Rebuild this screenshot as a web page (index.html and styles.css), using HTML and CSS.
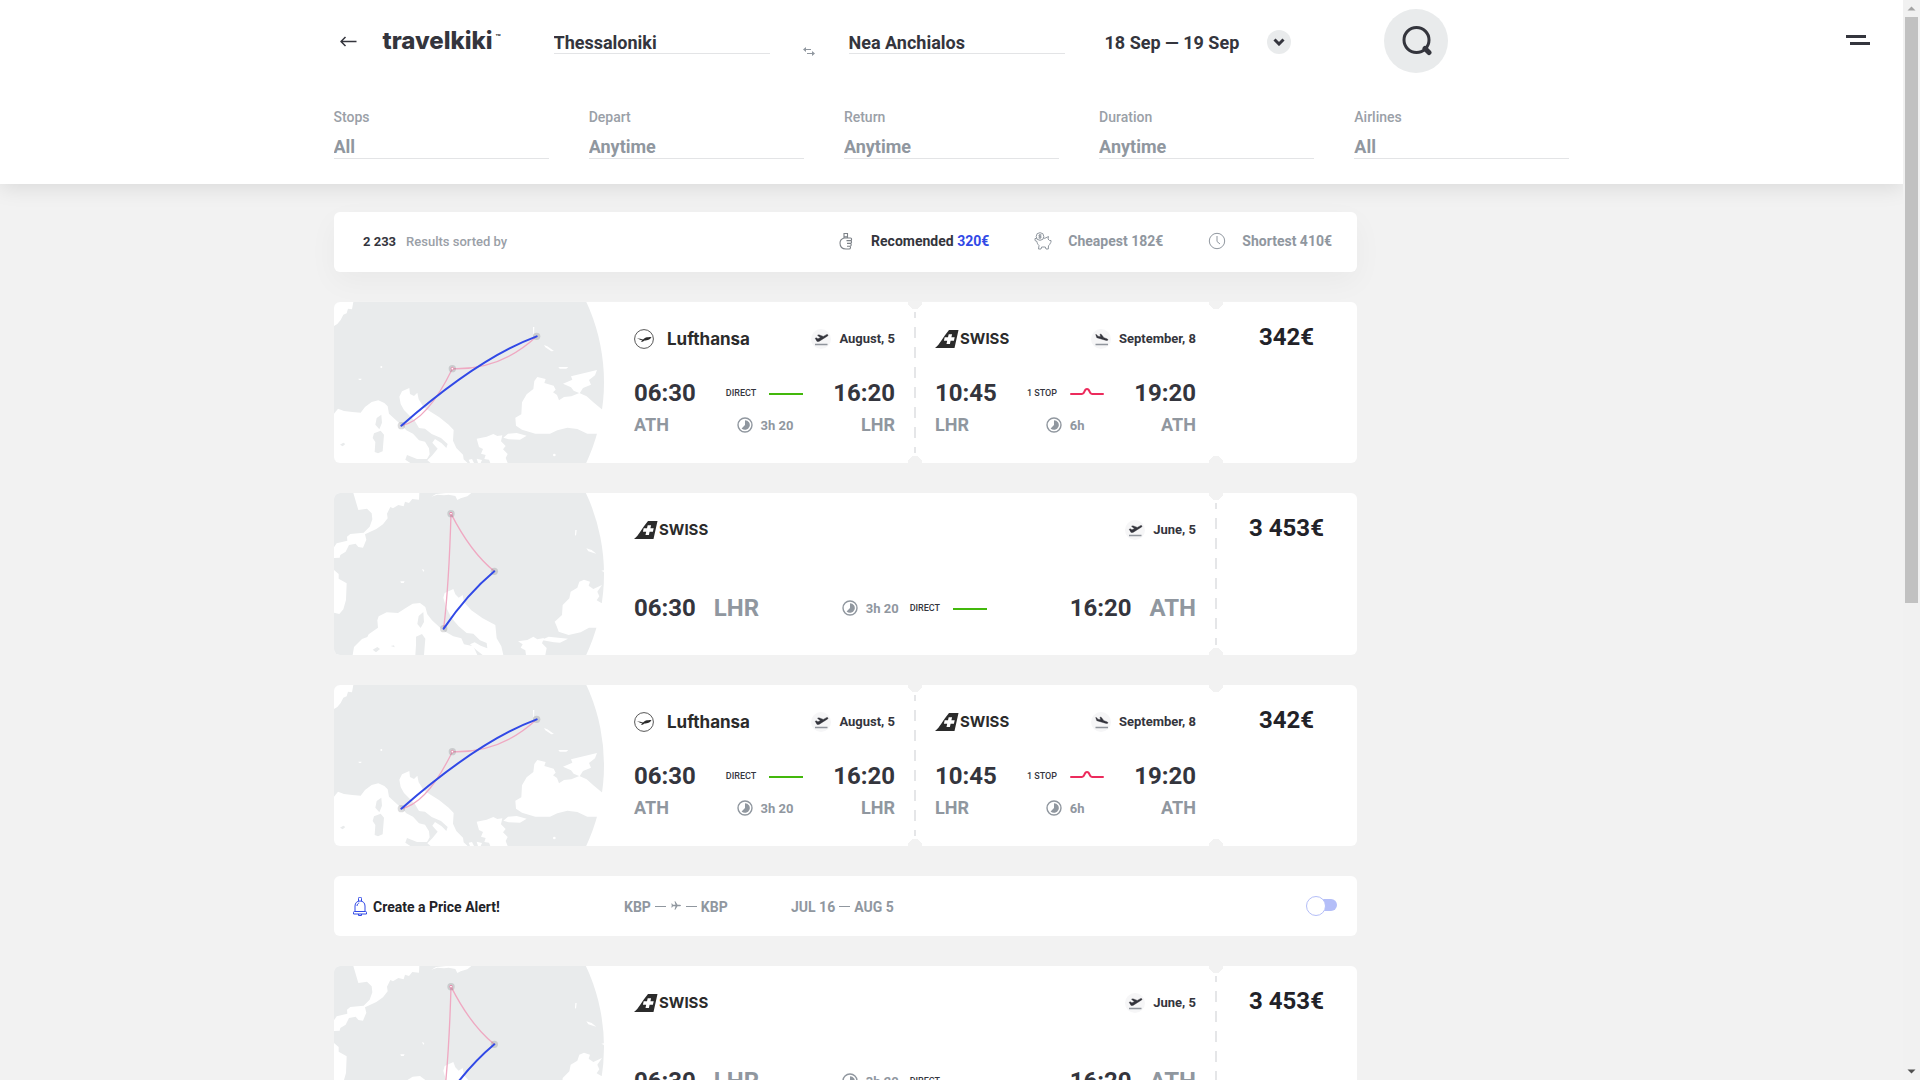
FILE: index.html
```html
<!DOCTYPE html>
<html lang="en">
<head>
<meta charset="utf-8">
<title>travelkiki – Flights</title>
<meta name="viewport" content="width=device-width, initial-scale=1">
<link rel="stylesheet" href="styles.css">
</head>
<body>
<svg class="sprite" aria-hidden="true">
  <symbol id="takeoff" viewBox="0 0 20 20">
    <path d="M4.2 9.2l1-.4 1.700 1 2.500-1-2.900-2.500 1.400-.5 4.400 1.600 2.700-1.500c.8-.4 1.700-.4 1.900 0 .2.5-.2 1.100-1 1.500L8 12.400H6z" fill="#34353d" stroke="#34353d" stroke-width=".4"/>
    <path d="M4 15.500h12.500" stroke="#90959c" stroke-width="1.300"/>
  </symbol>
  <symbol id="landing" viewBox="0 0 20 20">
    <path d="M4.700 5.500l1 .2 1.200 1.500 2.600.5-.5-2.700 1.400.4 2.500 3.300 2.900 1c.8.3 1.300.9 1.100 1.400-.1.500-.9.600-1.700.3L5.800 8.700z" fill="#34353d" stroke="#34353d" stroke-width=".4"/>
    <path d="M4.500 15.500H17" stroke="#90959c" stroke-width="1.300"/>
  </symbol>
  <symbol id="duration" viewBox="0 0 16 16">
    <circle cx="8" cy="8" r="7" fill="none" stroke="#90979f" stroke-width="1.400"/>
    <path d="M8 3.200a4.800 4.800 0 1 1-3.400 8.200L8 8z" fill="#90979f"/>
  </symbol>
  <symbol id="crane" viewBox="0 0 20 20">
    <circle cx="10" cy="10" r="9.400" fill="#fff" stroke="#2b2b2b" stroke-width=".8"/>
    <path d="M2.500 9.300c3 .2 5 1 6.600 1.300C10.300 8.800 12.500 8 17.600 8l-1 .8h.8l-1.300.8h.6l-1.600.8c-1.700 1-3.300.7-4.600 1.200-1 1-2 1.500-3.600 1.400l1.400-1.500C6.500 11.200 4.900 10 2.500 9.300z" fill="#2b2b2b"/>
  </symbol>
  <symbol id="tail" viewBox="0 0 24 18">
    <path d="M14 0h9.500L19.500 18H0C5 14.500 8 7 14 0z" fill="#2b2b2b"/>
    <path d="M13.700 4.200h3.400l-.7 3.100h3.300l-.8 3.400h-3.300l-.7 3.200h-3.400l.7-3.200H8.900l.8-3.400H13z" fill="#fff"/>
  </symbol>
  <symbol id="line-direct" viewBox="0 0 34 10">
    <path d="M0 6h34" stroke="#43b80c" stroke-width="2"/>
  </symbol>
  <symbol id="line-stop" viewBox="0 0 34 10">
    <path d="M1 6h11c3 0 1.800-5 5-5s2 5 5 5h11" fill="none" stroke="#ec2b5c" stroke-width="2" stroke-linecap="round"/>
  </symbol>
  <symbol id="map-east" viewBox="30 30 810 483">
    <circle cx="266" cy="271" r="574" fill="#e9ebec"/>
    <g fill="#fff">
      <path d="M30 30h58l-4 22-12-2-4 14-10 4-8 16-10 12-10 6z"/>
      <path d="M30 365l12-15 18 7 25 3 25 2 13-17 20-15 20-5 18 8 10 10 4 22 18 17 20 18 14 15 20 10 18 20 18 4 12 20 2 18-8 14-30 0-30-12-5 14 30 20H30z"/>
      <path d="M320 513l-10-8 15-15 16-20-16-18 8-11 20 13 14 14 4-12-20-18-28-12-20-16-18-2-12-20-13-14-20-20-10-18-4-22 8-16 22-10 2 18 12 6 10-10 4 20 15 24 22 14 25 16 28 22 15 16-2 32 10 22 20 20 2 14 14 13z"/>
      <path d="M434 503l10-2 6 12h-12zM458 500l16 4-4 9h-8z"/>
      <path d="M458 440l30-6 20-8 12 6 15-2-4 18 14 14-8 10 14 14-6 12 6 15h-52l-4-10-14-2 4-12-14-4 6-14-12-6zM538 437l14-12 26-2 30 8-20 12-34-1z"/>
      <path d="M640 255l25 6-4 12 28 8 6 12-8 8 12 8 6 16 15-10 22-2 24-10 22 10 20 18 27 22 10 30-25 42-30 0-30-14-30-4-30 8-22 10-44 0-40-12-18-12-2-24 18-10 2-36 14-24 20-16 3-24z"/>
      <path d="M717 275l28-12-4-10 50-12 28-7-6 16-18 14 6 14-24 10-10 16-18-8-8-10zM703 225h30l-6 5h-20zM660 159l10 4 20 14-8 1-18-12zM627 105h4l-1 22h-2z"/>
      <circle cx="691" cy="489" r="4"/><circle cx="172" cy="225" r="3"/><path d="M103 260h10l-2 4h-6z"/>
    </g>
    <g fill="#e9ebec"><path d="M172 368l2 24-8 20-12-14 4-20zM150 424l20-8 10 12-4 50-14 6-10-4 2-30-8-12zM48 458l10-6 6 4-8 7z"/></g>
    <path d="M638 133Q530 235 385 230Q310 385 232 401" fill="none" stroke="#efa9c2" stroke-width="4"/>
    <g fill="#34353d" fill-opacity=".17"><circle cx="638" cy="133" r="11"/><circle cx="385" cy="230" r="11"/><circle cx="232" cy="401" r="11"/></g>
    <circle cx="385" cy="230" r="4" fill="#fff" stroke="#e58cab" stroke-width="3"/>
    <path d="M232 401Q465 197 638 133" fill="none" stroke="#3149e6" stroke-width="6" stroke-linecap="round"/>
  </symbol>
  <symbol id="map-west" viewBox="30 27 810 486">
    <circle cx="266" cy="271" r="574" fill="#e9ebec"/>
    <g fill="#fff">
      <path d="M88 27h198l-1 20-20-2-10 12-12-4-4 14-16-4-16 10-8-4-10 20 2 14-14 18-20 14-34 16 4 16-10 24-14-2-8-10-20 4-10 20-16 10-2 8-17 1v-32l8-12 32-8-1-12 10-8 40-4 18-18 8-22-2-18-14-14-26 4-6-20z"/>
      <path d="M322 38l14-8 30-3h76l-12 10-20 6-10 5-6-12-20-4-14 2-20-2z"/>
      <path d="M30 258l14 12 0 14 24 14-2 50-8 28-12 14-16-4z"/>
      <path d="M86 513l4-24 24-24 16-6 4-8 28-20-2-22 4-12 24-12 34 2 22-14 22-14 22-2 16 12 6 22 14 18 22 20 18 14 24 14 24 6 8 18 28 6 12 26z"/>
      <path d="M476 513l-18-14-20-18 14-6 18 10 20 8-2-16-20-8-20-20-20-2-24-20-22-26-16-32-8-28 4-14 26-12 6 16 10 10 12-8 4 22 22 24 34 24 38 20 4 40 14 24 6 26z"/>
      <path d="M582 472l28-4 18-10 12 8 20-4-6 16 14 14-4 21h-58l-2-14-14-8 6-10zM652 468l22-10 58 6-24 12-18-1z"/>
      <path d="M766 293l14-6 18 6-4 12 14 10 26-12-14 20 6 14-8 12 14 8 8 0v40l-20 34-25 0-25 14-36 8-30-10-6-16-6-14 22-20 2-30 20-20 4-20 20-12z"/>
      <path d="M754 138h4l-2 18-3-4zM787 193l16 5 14 11-10-3-14-4zM832 260l8-1v5zM229 292h13l-3 5h-8zM294 255l7 3-3 6z"/>
    </g>
    <g fill="#e9ebec"><path d="M298 384l2 30-10 18-10-12 4-24zM276 458l18-8 10 14-4 49h-26l2-30zM146 497l14-8 8 6-12 10zM200 486l10-2 2 6z"/></g>
    <path d="M359 434Q375 300 381 89Q440 205 511 262" fill="none" stroke="#efa9c2" stroke-width="4"/>
    <g fill="#34353d" fill-opacity=".17"><circle cx="381" cy="89" r="11"/><circle cx="511" cy="262" r="11"/><circle cx="359" cy="434" r="11"/></g>
    <circle cx="381" cy="89" r="4" fill="#fff" stroke="#e58cab" stroke-width="3"/>
    <path d="M359 434Q430 330 511 262" fill="none" stroke="#3149e6" stroke-width="6" stroke-linecap="round"/>
  </symbol>
</svg>

<div class="shell">
<div class="view">
  <header class="header">
    <div class="header-main">
      <form class="search">
        <div class="brand">
          <button class="plain" type="button" aria-label="Back">
            <svg width="17" height="11" viewBox="0 0 17 11"><path d="M5.500 1L1 5.500 5.500 10M1 5.500h15.500" fill="none" stroke="#34353d" stroke-width="1.500" stroke-linejoin="round"/></svg>
          </button>
          <a class="logo" href="#">travelkiki<span class="tm">™</span></a>
        </div>
        <input class="place" type="text" aria-label="From" value="Thessaloniki">
        <button class="plain swap" type="button" aria-label="Swap places">
          <svg width="12" height="9" viewBox="0 0 12 9"><path d="M0 2.500L3 0v2h5v1H3v2zM12 6.500L9 4v2H4v1h5v2z" fill="#90979f"/></svg>
        </button>
        <input class="place" type="text" aria-label="To" value="Nea Anchialos">
        <button class="plain dates" type="button">18 Sep — 19 Sep
          <span class="chevron"><svg width="12" height="8" viewBox="0 0 12 8"><path d="M1.500 1.500L6 6l4.500-4.500" fill="none" stroke="#34353d" stroke-width="3"/></svg></span>
        </button>
        <button class="find" type="submit" aria-label="Search">
          <svg width="30" height="30" viewBox="0 0 30 30"><circle cx="14.500" cy="14" r="12.500" fill="none" stroke="#34353d" stroke-width="3"/><path d="M23 22.500l4 4" stroke="#34353d" stroke-width="5" stroke-linecap="round"/></svg>
        </button>
      </form>
      <div class="filters">
        <label class="filter">Stops<select><option>All</option></select></label>
        <label class="filter">Depart<select><option>Anytime</option></select></label>
        <label class="filter">Return<select><option>Anytime</option></select></label>
        <label class="filter">Duration<select><option>Anytime</option></select></label>
        <label class="filter">Airlines<select><option>All</option></select></label>
      </div>
    </div>
    <button class="plain menu" type="button" aria-label="Menu">
      <svg width="24" height="10" viewBox="0 0 24 10"><path d="M0 1.500h20M4 8.500h20" stroke="#34353d" stroke-width="3"/></svg>
    </button>
  </header>

  <main class="results">
    <section class="panel sortbar">
      <p class="count"><strong>2 233</strong>Results sorted by</p>
      <div class="sorts">
        <button class="plain sort active" type="button">
          <svg width="18" height="18" viewBox="0 0 18 18"><path d="M7 6V1.500h3.500V6M7 4.800h3.500M7 6C4 7 3 8.500 3 11c0 4 2 6 6 6h3.500M7 6h6.500c1.500 0 1.500 2.600 0 2.600H9.500M13.500 8.600c1.600.4 1.300 2.800-.2 2.800H10M13.300 11.400c1.500.5 1.100 2.800-.3 2.800h-3M13 14.200c1 .8.500 2.800-.8 2.800" fill="none" stroke="#7d8288" stroke-width="1.100"/></svg>
          <span>Recomended <em>320€</em></span>
        </button>
        <button class="plain sort" type="button">
          <svg width="18" height="18" viewBox="0 0 18 18"><g fill="none" stroke="#90979f"><circle cx="6" cy="4.500" r="3.800"/><path d="M7.500 3H5v1.400h2v1.400H4.500M6 2v5M2.700 6.500H1v2l2 1c0 2 1 3 2 4L4.500 17H7l.7-2h3.600l.7 2h2.300l.2-3.200c1-.9 1.400-1.600 1.700-2.600l.8-.7V8.500H15.500L14 7l.5-2.500L11 6.200H9.500"/></g></svg>
          <span>Cheapest 182€</span>
        </button>
        <button class="plain sort" type="button">
          <svg width="18" height="18" viewBox="0 0 18 18"><circle cx="9" cy="9" r="7.700" fill="none" stroke="#90979f"/><path d="M9 4v5.500l3 2.500" fill="none" stroke="#90979f"/></svg>
          <span>Shortest 410€</span>
        </button>
      </div>
    </section>

    <article class="panel ticket">
      <svg class="map" role="img" aria-label="Route map"><use href="#map-east"/></svg>
      <div class="legs">
        <section class="leg">
          <div class="row head"><span class="airline lufthansa"><svg width="20" height="20"><use href="#crane"/></svg>Lufthansa</span><span class="date"><svg width="20" height="20"><use href="#takeoff"/></svg>August, 5</span></div>
          <div class="row times"><time>06:30</time><span class="stops">DIRECT<svg width="34" height="10"><use href="#line-direct"/></svg></span><time>16:20</time></div>
          <div class="row airports"><span>ATH</span><span class="duration"><svg width="16" height="16"><use href="#duration"/></svg>3h 20</span><span>LHR</span></div>
        </section>
        <section class="leg tear dashed">
          <div class="row head"><span class="airline swiss"><svg width="24" height="18"><use href="#tail"/></svg>SWISS</span><span class="date"><svg width="20" height="20"><use href="#landing"/></svg>September, 8</span></div>
          <div class="row times"><time>10:45</time><span class="stops">1 STOP<svg width="34" height="10"><use href="#line-stop"/></svg></span><time>19:20</time></div>
          <div class="row airports"><span>LHR</span><span class="duration"><svg width="16" height="16"><use href="#duration"/></svg>6h</span><span>ATH</span></div>
        </section>
      </div>
      <div class="price tear">342€</div>
    </article>

    <article class="panel ticket oneway">
      <svg class="map" role="img" aria-label="Route map"><use href="#map-west"/></svg>
      <div class="legs">
        <section class="leg">
          <div class="row head"><span class="airline swiss"><svg width="24" height="18"><use href="#tail"/></svg>SWISS</span><span class="date"><svg width="20" height="20"><use href="#takeoff"/></svg>June, 5</span></div>
          <div class="row times"><span class="stop-point"><time>06:30</time>LHR</span><span class="flight"><span class="duration"><svg width="16" height="16"><use href="#duration"/></svg>3h 20</span><span class="stops">DIRECT<svg width="34" height="10"><use href="#line-direct"/></svg></span></span><span class="stop-point"><time>16:20</time>ATH</span></div>
        </section>
      </div>
      <div class="price tear dashed">3 453€</div>
    </article>

    <article class="panel ticket">
      <svg class="map" role="img" aria-label="Route map"><use href="#map-east"/></svg>
      <div class="legs">
        <section class="leg">
          <div class="row head"><span class="airline lufthansa"><svg width="20" height="20"><use href="#crane"/></svg>Lufthansa</span><span class="date"><svg width="20" height="20"><use href="#takeoff"/></svg>August, 5</span></div>
          <div class="row times"><time>06:30</time><span class="stops">DIRECT<svg width="34" height="10"><use href="#line-direct"/></svg></span><time>16:20</time></div>
          <div class="row airports"><span>ATH</span><span class="duration"><svg width="16" height="16"><use href="#duration"/></svg>3h 20</span><span>LHR</span></div>
        </section>
        <section class="leg tear dashed">
          <div class="row head"><span class="airline swiss"><svg width="24" height="18"><use href="#tail"/></svg>SWISS</span><span class="date"><svg width="20" height="20"><use href="#landing"/></svg>September, 8</span></div>
          <div class="row times"><time>10:45</time><span class="stops">1 STOP<svg width="34" height="10"><use href="#line-stop"/></svg></span><time>19:20</time></div>
          <div class="row airports"><span>LHR</span><span class="duration"><svg width="16" height="16"><use href="#duration"/></svg>6h</span><span>ATH</span></div>
        </section>
      </div>
      <div class="price tear">342€</div>
    </article>

    <section class="panel alert">
      <label class="alert-title" for="alert">
        <svg width="14" height="20" viewBox="0 0 14 20"><g fill="none" stroke="#3149e6"><path d="M5.500 4V1.500a1.500 1.500 0 0 1 3 0V4M2 14.500V9c0-3 2-5 5-5s5 2 5 5v5.500M4 9c0-1.500 1-2.700 2.200-3M1.500 14.500h11a1 1 0 0 1 1 1v1.500H.5v-1.500a1 1 0 0 1 1-1zM5.500 17v1.500h3V17"/></g></svg>
        Create a Price Alert!
      </label>
      <p class="alert-route">KBP<i class="dash"></i><svg width="10" height="9" viewBox="0 0 10 9"><path d="M10 4.500c0-.5-.7-.8-1.500-.8H6.500L4.300.3H3.500l1 3.400H2L1 2.500H.3l.5 2-.5 2H1l1-1.200h2.500l-1 3.400h.8l2.200-3.400h2c.8 0 1.500-.3 1.500-.8z" fill="#90979f"/></svg><i class="dash"></i>KBP</p>
      <p class="alert-dates">JUL 16<i class="dash"></i>AUG 5</p>
      <input class="toggle" type="checkbox" id="alert">
    </section>

    <article class="panel ticket oneway">
      <svg class="map" role="img" aria-label="Route map"><use href="#map-west"/></svg>
      <div class="legs">
        <section class="leg">
          <div class="row head"><span class="airline swiss"><svg width="24" height="18"><use href="#tail"/></svg>SWISS</span><span class="date"><svg width="20" height="20"><use href="#takeoff"/></svg>June, 5</span></div>
          <div class="row times"><span class="stop-point"><time>06:30</time>LHR</span><span class="flight"><span class="duration"><svg width="16" height="16"><use href="#duration"/></svg>3h 20</span><span class="stops">DIRECT<svg width="34" height="10"><use href="#line-direct"/></svg></span></span><span class="stop-point"><time>16:20</time>ATH</span></div>
        </section>
      </div>
      <div class="price tear dashed">3 453€</div>
    </article>
  </main>
</div>

<div class="scrollbar" aria-hidden="true">
  <svg width="17" height="17" viewBox="0 0 17 17"><path d="M8.500 6.500l4 4h-8z" fill="#a3a3a3"/></svg>
  <div class="thumb"></div>
  <svg width="17" height="17" viewBox="0 0 17 17"><path d="M8.500 10.500l4-4h-8z" fill="#505050"/></svg>
</div>
</div>
</body>
</html>
```

FILE: styles.css
```css
:root {
  --ink: #34353d;
  --muted: #90979f;
  --label: #9aa0a7;
  --rule: #e3e4e6;
  --page: #f2f2f2;
  --blue: #3149e6;
}

* { box-sizing: border-box; }

body {
  margin: 0;
  font-family: Roboto, "Liberation Sans", sans-serif;
  font-size: 14px;
  color: var(--ink);
  background: var(--page);
}

p { margin: 0; }
svg { display: block; flex: none; }
.sprite { position: absolute; width: 0; height: 0; }

.plain {
  padding: 0;
  border: 0;
  background: none;
  font: inherit;
  color: inherit;
  cursor: pointer;
}

.shell {
  display: grid;
  grid-template-columns: minmax(0, 1fr) 17px;
  height: 100vh;
}

.view {
  overflow: hidden auto;
  scrollbar-width: none;
}

/* header */
.header {
  display: grid;
  grid-template-columns: 1fr minmax(0, 1236px) 1fr;
  background: #fff;
  box-shadow: 0 4px 20px rgba(0, 0, 0, .1);
}

.header-main { grid-column: 2; }

.search {
  display: flex;
  align-items: center;
  height: 82px;
}

.brand {
  display: flex;
  align-items: center;
  gap: 26px;
  width: 220px;
  padding-left: 6px;
}

.logo {
  display: flex;
  gap: 3px;
  font: 800 24px/28px Inter, sans-serif;
  color: var(--ink);
  text-decoration: none;
}

.tm { font-size: 8px; line-height: 20px; }

.place {
  width: 216px;
  height: 24px;
  margin-top: 2px;
  padding: 1px 0 0;
  border: 0;
  border-bottom: 1px solid var(--rule);
  border-radius: 0;
  background: none;
  font: 700 18px/22px Roboto, sans-serif;
  color: var(--ink);
}

.swap {
  display: flex;
  justify-content: center;
  width: 79px;
  padding-top: 20px;
}

.dates {
  display: flex;
  align-items: center;
  gap: 28px;
  margin: 2px 0 0 40px;
  font-size: 18px;
  font-weight: 700;
}

.chevron {
  display: grid;
  place-items: center;
  width: 24px;
  height: 24px;
  border-radius: 50%;
  background: #e9ebec;
}

.find {
  display: grid;
  place-items: center;
  width: 64px;
  height: 64px;
  margin-left: 93px;
  padding: 0 0 0 2px;
  border: 0;
  border-radius: 50%;
  background: #e9ebec;
}

.menu {
  justify-self: end;
  align-self: start;
  margin: 35px 33px 0 0;
}

.filters {
  display: grid;
  grid-template-columns: repeat(5, 1fr);
  gap: 40px;
  padding: 26px 0 25px;
}

.filter {
  display: flex;
  flex-direction: column;
  gap: 9px;
  font-weight: 500;
  line-height: 18px;
  color: var(--label);
}

.filter select {
  appearance: none;
  height: 24px;
  padding: 1px 0 0;
  border: 0;
  border-bottom: 1px solid var(--rule);
  border-radius: 0;
  background: none;
  font: 700 18px/22px Roboto, sans-serif;
  color: var(--muted);
}

/* results */
.results {
  display: grid;
  grid-template-columns: minmax(0, 1023px);
  gap: 30px;
  max-width: 1235px;
  margin: 0 auto;
  padding: 28px 0 60px;
}

.panel {
  border-radius: 6px;
  background: #fff;
}

.sortbar {
  display: flex;
  align-items: center;
  justify-content: space-between;
  min-height: 60px;
  padding: 0 25px 2px 29px;
  box-shadow: 0 10px 30px rgba(0, 0, 0, .04);
}

.count {
  display: flex;
  gap: 10px;
  font-size: 13px;
  font-weight: 500;
  color: var(--label);
}

.count strong { color: var(--ink); }

.sorts { display: flex; gap: 45px; }

.sort {
  display: flex;
  align-items: center;
  gap: 16px;
  font-weight: 700;
  color: var(--muted);
}

.sort.active { color: var(--ink); }
.sort em { font-style: normal; color: var(--blue); }

/* tickets */
.ticket {
  display: grid;
  grid-template-columns: 270px minmax(0, 1fr) 141px;
  min-height: 161px;
}

.ticket.oneway { min-height: 162px; }

.map {
  width: 270px;
  height: 100%;
  border-radius: 6px 0 0 6px;
}

.legs { display: flex; padding-left: 10px; }

.leg {
  flex: 1;
  padding: 24px 20px 0;
}

.row {
  display: flex;
  align-items: center;
  justify-content: space-between;
}

.head { height: 26px; }

.airline { display: flex; align-items: center; }

.lufthansa {
  gap: 13px;
  font: 700 17px/26px Inter, sans-serif;
  color: #2b2b2b;
}

.swiss {
  gap: 1px;
  font: 700 15px/26px Inter, sans-serif;
  color: #2b2b2b;
}

.date {
  display: flex;
  align-items: center;
  gap: 8px;
  font-size: 13px;
  font-weight: 700;
  line-height: 14px;
}

.date svg { border-radius: 50%; background: #f6f6f7; }

.times {
  height: 28px;
  margin-top: 27px;
  font-size: 24px;
  font-weight: 700;
}

.airports {
  height: 24px;
  margin-top: 5px;
  font-size: 18px;
  font-weight: 700;
  color: var(--muted);
}

.stops {
  display: flex;
  align-items: center;
  gap: 13px;
  font-size: 9px;
  font-weight: 500;
}

.duration {
  display: flex;
  align-items: center;
  gap: 8px;
  font-size: 13px;
  font-weight: 700;
  color: var(--muted);
}

.airports .duration { padding-top: 2px; }

.oneway .times { margin-top: 51px; }
.stop-point { display: flex; gap: 18px; color: var(--muted); }
.stop-point time { color: var(--ink); }
.flight { display: flex; gap: 11px; }

.price {
  padding-top: 20px;
  font-size: 24px;
  font-weight: 700;
  line-height: 30px;
  text-align: center;
  color: #222228;
}

/* notches on the perforated edge, with an optional dashed line between */
.tear { position: relative; }

.tear::before {
  content: "";
  position: absolute;
  inset: 0 auto 0 -7px;
  width: 14px;
  padding: 10px 0;
  background:
    radial-gradient(circle at 50% 0, var(--page) 7px, transparent 7px) border-box,
    radial-gradient(circle at 50% 100%, var(--page) 7px, transparent 7px) border-box;
}

.tear.dashed::before {
  background:
    radial-gradient(circle at 50% 0, var(--page) 7px, transparent 7px) border-box,
    radial-gradient(circle at 50% 100%, var(--page) 7px, transparent 7px) border-box,
    linear-gradient(#e5e6e8 6px, transparent 6px 15px, #e5e6e8 15px) 50% 0 / 2px 20px repeat-y content-box;
}

/* price alert */
.alert {
  display: grid;
  grid-template-columns: 271px 167px 1fr auto;
  align-items: center;
  min-height: 60px;
  padding: 2px 20px 0 19px;
  font-weight: 700;
  color: var(--muted);
}

.alert-title {
  display: flex;
  align-items: center;
  gap: 6px;
  color: #222228;
}

.alert-route,
.alert-dates { display: flex; align-items: center; gap: 4px; }

.alert-route svg { margin: 0 1px 3px; }

.dash {
  width: 11px;
  height: 1px;
  margin-bottom: 2px;
  background: var(--muted);
}

.toggle {
  appearance: none;
  position: relative;
  width: 31px;
  height: 18px;
  margin: 0 0 4px;
}

.toggle::before {
  content: "";
  position: absolute;
  inset: 3px 0 3px 9px;
  border-radius: 0 6px 6px 0;
  background: #b4bef8;
}

.toggle::after {
  content: "";
  position: absolute;
  top: 0;
  left: 0;
  width: 18px;
  height: 18px;
  border: 1px solid #b4bef8;
  border-radius: 50%;
  background: #fff;
}

.scrollbar {
  display: grid;
  grid-template-rows: 17px 1fr 17px;
  justify-items: center;
  background: #f1f1f1;
}

.thumb {
  width: 13px;
  height: 56%;
  background: #c1c1c1;
}
```
